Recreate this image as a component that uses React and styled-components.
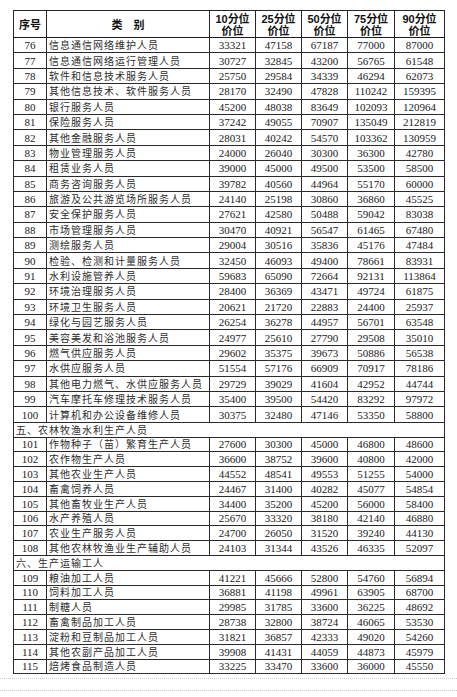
import React from 'react';
import styled, { createGlobalStyle } from 'styled-components';

const GlobalStyle = createGlobalStyle`
    html, body {
        margin: 0;
        padding: 0;
        background: #ffffff;
    }
    body {
        width: 457px;
        font-family: "Liberation Serif", "Noto Sans CJK SC", serif;
        color: #151515;
    }
`;

const groups = [
    {
        rowHeight: 15.4,
        rows: [
            [76, '信息通信网络维护人员', 33321, 47158, 67187, 77000, 87000],
            [77, '信息通信网络运行管理人员', 30727, 32845, 43200, 56765, 61548],
            [78, '软件和信息技术服务人员', 25750, 29584, 34339, 46294, 62073],
            [79, '其他信息技术、软件服务人员', 28170, 32490, 47828, 110242, 159395],
            [80, '银行服务人员', 45200, 48038, 83649, 102093, 120964],
            [81, '保险服务人员', 37242, 49055, 70907, 135049, 212819],
            [82, '其他金融服务人员', 28031, 40242, 54570, 103362, 130959],
            [83, '物业管理服务人员', 24000, 26040, 30300, 36300, 42780],
            [84, '租赁业务人员', 39000, 45000, 49500, 53500, 58500],
            [85, '商务咨询服务人员', 39782, 40560, 44964, 55170, 60000],
            [86, '旅游及公共游览场所服务人员', 24140, 25198, 30860, 36860, 45525],
            [87, '安全保护服务人员', 27621, 42580, 50488, 59042, 83038],
            [88, '市场管理服务人员', 30470, 40921, 56547, 61465, 67480],
            [89, '测绘服务人员', 29004, 30516, 35836, 45176, 47484],
            [90, '检验、检测和计量服务人员', 32450, 46093, 49400, 78661, 83931],
            [91, '水利设施管养人员', 59683, 65090, 72664, 92131, 113864],
            [92, '环境治理服务人员', 28400, 36369, 43471, 49724, 61875],
            [93, '环境卫生服务人员', 20621, 21720, 22883, 24400, 25937],
            [94, '绿化与园艺服务人员', 26254, 36278, 44957, 56701, 63548],
            [95, '美容美发和浴池服务人员', 24977, 25610, 27790, 29508, 35010],
            [96, '燃气供应服务人员', 29602, 35375, 39673, 50886, 56538],
            [97, '水供应服务人员', 51554, 57176, 66909, 70917, 78186],
            [98, '其他电力燃气、水供应服务人员', 29729, 39029, 41604, 42952, 44744],
            [99, '汽车摩托车修理技术服务人员', 35400, 39500, 54420, 83292, 97972],
            [100, '计算机和办公设备维修人员', 30375, 32480, 47146, 53350, 58800],
        ],
    },
    {
        rowHeight: 14.8,
        section: '五、农林牧渔水利生产人员',
        rows: [
            [101, '作物种子（苗）繁育生产人员', 27600, 30300, 45000, 46800, 48600],
            [102, '农作物生产人员', 36600, 38752, 39600, 40800, 42000],
            [103, '其他农业生产人员', 44552, 48541, 49553, 51255, 54000],
            [104, '畜禽饲养人员', 24467, 31400, 40282, 45077, 54854],
            [105, '其他畜牧业生产人员', 34400, 35200, 45200, 56000, 58400],
            [106, '水产养殖人员', 25670, 33320, 38180, 42140, 46880],
            [107, '农业生产服务人员', 24700, 26050, 31520, 39240, 44130],
            [108, '其他农林牧渔业生产辅助人员', 24103, 31344, 43526, 46335, 52097],
        ],
    },
    {
        rowHeight: 14.8,
        section: '六、生产运输工人',
        rows: [
            [109, '粮油加工人员', 41221, 45666, 52800, 54760, 56894],
            [110, '饲料加工人员', 36881, 41198, 49961, 63905, 68700],
            [111, '制糖人员', 29985, 31785, 33600, 36225, 48692],
            [112, '畜禽制品加工人员', 28738, 32800, 38724, 46065, 53530],
            [113, '淀粉和豆制品加工人员', 31821, 36857, 42333, 49020, 54260],
            [114, '其他农副产品加工人员', 39908, 41431, 44059, 44873, 45979],
            [115, '焙烤食品制造人员', 33225, 33470, 33600, 36000, 45550],
        ],
    },
];

const percentiles = ['10', '25', '50', '75', '90'];
const colWidths = [33, 163, 46, 46, 46, 47, 50];

const App = () => {
    return (
        <Page>
            <GlobalStyle />
            <Table>
                <colgroup>
                    {colWidths.map((w, i) => (
                        <col key={i} style={{ width: w }} />
                    ))}
                </colgroup>
                <thead>
                    <HeadRow>
                        <HeadCell>序号</HeadCell>
                        <HeadCell $serif>类　别</HeadCell>
                        {percentiles.map((p) => (
                            <HeadCell key={p}>
                                <HeadLine>{p}分位</HeadLine>
                                <HeadLine>价位</HeadLine>
                            </HeadCell>
                        ))}
                    </HeadRow>
                </thead>
                {groups.map((group, gi) => (
                    <Body key={gi} $rowHeight={group.rowHeight}>
                        {group.section && (
                            <tr>
                                <SectionCell colSpan={7}>{group.section}</SectionCell>
                            </tr>
                        )}
                        {group.rows.map(([no, name, ...values]) => (
                            <tr key={no}>
                                <NoCell>{no}</NoCell>
                                <NameCell>{name}</NameCell>
                                {values.map((v, i) => (
                                    <NumCell key={i}>{v}</NumCell>
                                ))}
                            </tr>
                        ))}
                    </Body>
                ))}
            </Table>
            <ScanLine />
            <ScanLine $last />
        </Page>
    );
};

const Page = styled.div`
    width: 457px;
    height: 697px;
    padding-top: 10px;
    box-sizing: border-box;
    overflow: hidden;
`;

const Table = styled.table`
    margin-left: 13px;
    width: 431px;
    table-layout: fixed;
    border-collapse: collapse;
    border: 1.6px solid #1c1c1c;
`;

const HeadRow = styled.tr`
    height: 27px;
`;

const HeadCell = styled.th`
    padding: 2px 0 0;
    border: 1px solid #262626;
    border-bottom: 1.6px solid #1c1c1c;
    font-family: ${(p) => (p.$serif ? '"Liberation Serif", "Noto Sans CJK SC", serif' : '"Liberation Sans", "Noto Sans CJK SC", sans-serif')};
    font-size: 11px;
    font-weight: 700;
    line-height: 12px;
    text-align: center;
    vertical-align: middle;
    color: #111;
`;

const HeadLine = styled.div`
    white-space: nowrap;
`;

const Body = styled.tbody`
    tr {
        height: ${(p) => p.$rowHeight}px;
    }
`;

const BaseCell = styled.td`
    padding: 0;
    border: 1px solid #2a2a2a;
    vertical-align: middle;
    white-space: nowrap;
    overflow: hidden;
    line-height: 12px;
`;

const NoCell = styled(BaseCell)`
    text-align: center;
    font-family: "Liberation Serif", serif;
    font-size: 11px;
    color: #1a1a1a;
`;

const NameCell = styled(BaseCell)`
    padding-left: 2px;
    font-family: "Noto Sans CJK SC", sans-serif;
    font-size: 10px;
    letter-spacing: 1px;
    color: #2c2c2c;
`;

const NumCell = styled(BaseCell)`
    text-align: center;
    font-family: "Liberation Serif", serif;
    font-size: 11px;
    color: #1a1a1a;
`;

const SectionCell = styled(BaseCell)`
    padding-left: 2px;
    font-family: "Noto Sans CJK SC", sans-serif;
    font-size: 10px;
    letter-spacing: 1px;
    color: #2c2c2c;
`;

const ScanLine = styled.div`
    margin-top: ${(p) => (p.$last ? '11px' : '4px')};
    width: 457px;
    border-top: 1px dotted #c9c9d6;
`;

export default App;
